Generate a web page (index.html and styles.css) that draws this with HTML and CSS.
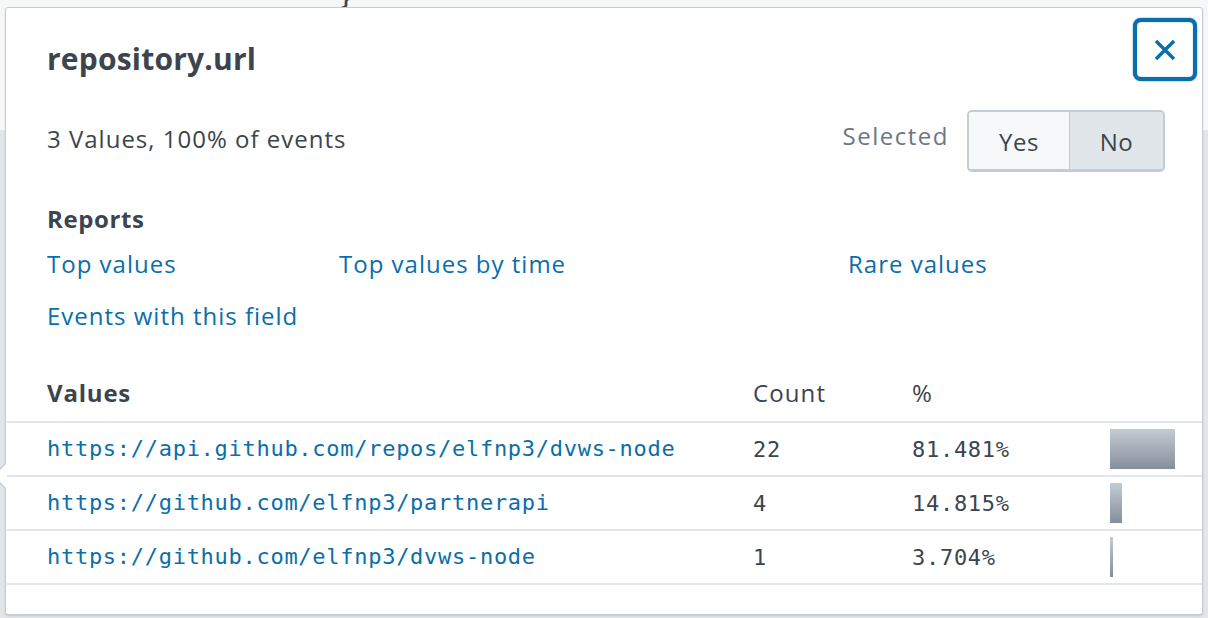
FILE: index.html
```html
<!DOCTYPE html>
<html>
<head>
<meta charset="utf-8">
<link rel="stylesheet" href="styles.css">
</head>
<body>
<span class="bg-code">}</span>
<div class="popover">
  <div class="head">
    <h1 class="title">repository.url</h1>
    <button class="close" aria-label="Close">
      <svg width="24" height="24" viewBox="0 0 24 24"><path d="M3 3L21 21M21 3L3 21" stroke="#0a6eaa" stroke-width="3.4" stroke-linecap="butt" fill="none"/></svg>
    </button>
  </div>
  <div class="summary">
    <div class="count-text">3 Values, 100% of events</div>
    <div class="selected">
      <span class="selected-label">Selected</span>
      <div class="toggle">
        <span class="tbtn yes">Yes</span>
        <span class="tbtn no">No</span>
      </div>
    </div>
  </div>
  <div class="reports">
    <div class="section-title">Reports</div>
    <div class="links">
      <a class="link">Top values</a>
      <a class="link">Top values by time</a>
      <a class="link">Rare values</a>
      <a class="link">Events with this field</a>
    </div>
  </div>
  <div class="table">
    <div class="row header">
      <div class="c-val">Values</div>
      <div class="c-count">Count</div>
      <div class="c-pct">%</div>
      <div class="c-bar"></div>
    </div>
    <div class="row">
      <div class="c-val mono link">https://api.github.com/repos/elfnp3/dvws-node</div>
      <div class="c-count mono">22</div>
      <div class="c-pct mono">81.481%</div>
      <div class="c-bar"><span class="bar" style="width:65px"></span></div>
    </div>
    <div class="row">
      <div class="c-val mono link">https://github.com/elfnp3/partnerapi</div>
      <div class="c-count mono">4</div>
      <div class="c-pct mono">14.815%</div>
      <div class="c-bar"><span class="bar" style="width:12px"></span></div>
    </div>
    <div class="row">
      <div class="c-val mono link">https://github.com/elfnp3/dvws-node</div>
      <div class="c-count mono">1</div>
      <div class="c-pct mono">3.704%</div>
      <div class="c-bar"><span class="bar" style="width:3px"></span></div>
    </div>
  </div>
</div>
</body>
</html>
```
FILE: styles.css
```css
html, body { margin: 0; padding: 0; }
body {
  width: 1208px;
  height: 618px;
  overflow: hidden;
  position: relative;
  box-sizing: border-box;
  padding: 7px 5px 0 5px;
  font-family: "Open Sans", "Lato", sans-serif;
  color: #3c444d;
  background: linear-gradient(#f6f7f8 0, #f6f7f8 130px, #e2e6ea 130px);
}
.bg-code {
  position: absolute;
  left: 340px;
  top: -14px;
  font-family: "DejaVu Sans Mono", monospace;
  font-size: 20px;
  font-weight: bold;
  color: #3c444d;
}
.popover {
  position: relative;
  width: 1198px;
  height: 608px;
  box-sizing: border-box;
  background: #fff;
  border: 1px solid #c3cbd4;
  border-radius: 3px;
  box-shadow: 0 1px 2px rgba(0,0,0,0.12);
}
.popover::before {
  content: "";
  position: absolute;
  left: -14px;
  top: 454px;
  border-style: solid;
  border-width: 14px 14px 14px 0;
  border-color: transparent #c3cbd4 transparent transparent;
}
.popover::after {
  content: "";
  position: absolute;
  left: -12px;
  top: 455px;
  border-style: solid;
  border-width: 13px 13px 13px 0;
  border-color: transparent #fff transparent transparent;
}
.head {
  display: flex;
  justify-content: space-between;
  align-items: flex-start;
  padding: 10px 5px 0 41px;
}
.title {
  margin: 23px 0 0 0;
  font-size: 30px;
  line-height: 36px;
  font-weight: bold;
  color: #3c444d;
  letter-spacing: 0.2px;
}
.close {
  width: 64px;
  height: 63px;
  box-sizing: border-box;
  border: 4px solid #0a6eaa;
  border-radius: 8px;
  background: #fff;
  display: flex;
  align-items: center;
  justify-content: center;
  padding: 0;
  box-shadow: 0 0 1.5px #0a6eaa, inset 0 0 1px #0a6eaa;
}
.summary {
  display: flex;
  justify-content: space-between;
  align-items: center;
  padding: 0 37px 0 41px;
  margin-top: 29px;
}
.count-text {
  font-size: 24px;
  line-height: 30px;
  letter-spacing: 1px;
  margin-top: -4px;
}
.selected {
  display: flex;
  align-items: center;
  gap: 18px;
}
.selected-label {
  font-size: 24px;
  line-height: 30px;
  letter-spacing: 1.5px;
  color: #6b7785;
  margin-top: -10px;
}
.toggle {
  display: flex;
  border: 2px solid #c3cbd4;
  border-bottom-width: 3px;
  border-radius: 5px;
  overflow: hidden;
  height: 62px;
  box-sizing: border-box;
}
.tbtn {
  display: flex;
  align-items: center;
  justify-content: center;
  font-size: 24px;
  letter-spacing: 0.6px;
  padding-top: 1px;
}
.yes { width: 100px; background: #f7f8fa; border-right: 1px solid #c3cbd4; color: #3c444d; }
.no { width: 93px; background: #e1e6eb; color: #3c444d; }
.reports {
  padding: 0 0 0 41px;
  margin-top: 32px;
}
.section-title {
  font-size: 24px;
  font-weight: bold;
  line-height: 30px;
  letter-spacing: 0.6px;
}
.links {
  display: grid;
  grid-template-columns: 292px 509px auto;
  row-gap: 24px;
  margin-top: 16px;
}
.link {
  color: #0a6eaa;
  font-size: 24px;
  line-height: 28px;
  letter-spacing: 1px;
  text-decoration: none;
}
.table {
  margin-top: 47px;
  padding-left: 1px;
}
.row {
  display: flex;
  align-items: center;
  height: 54px;
  border-bottom: 2px solid #e1e6eb;
  box-sizing: border-box;
}
.row.header {
  height: 46px;
  padding-top: 1px;
  align-items: flex-start;
  font-size: 24px;
  line-height: 30px;
  letter-spacing: 1.1px;
}
.header .c-val { font-weight: bold; letter-spacing: 0.8px; }
.c-val { width: 706px; padding-left: 40px; }
.c-count { width: 159px; }
.c-pct { width: 198px; }
.c-bar { flex: 1; display: flex; align-items: center; }
.mono {
  font-family: "DejaVu Sans Mono", monospace;
  font-size: 22px;
  letter-spacing: 0.72px;
  color: #3c444d;
}
.mono.link { color: #0a6eaa; font-size: 22px; line-height: 28px; }
.bar {
  display: block;
  height: 40px;
  background: linear-gradient(#c3cbd4, #858f9b);
}
```
